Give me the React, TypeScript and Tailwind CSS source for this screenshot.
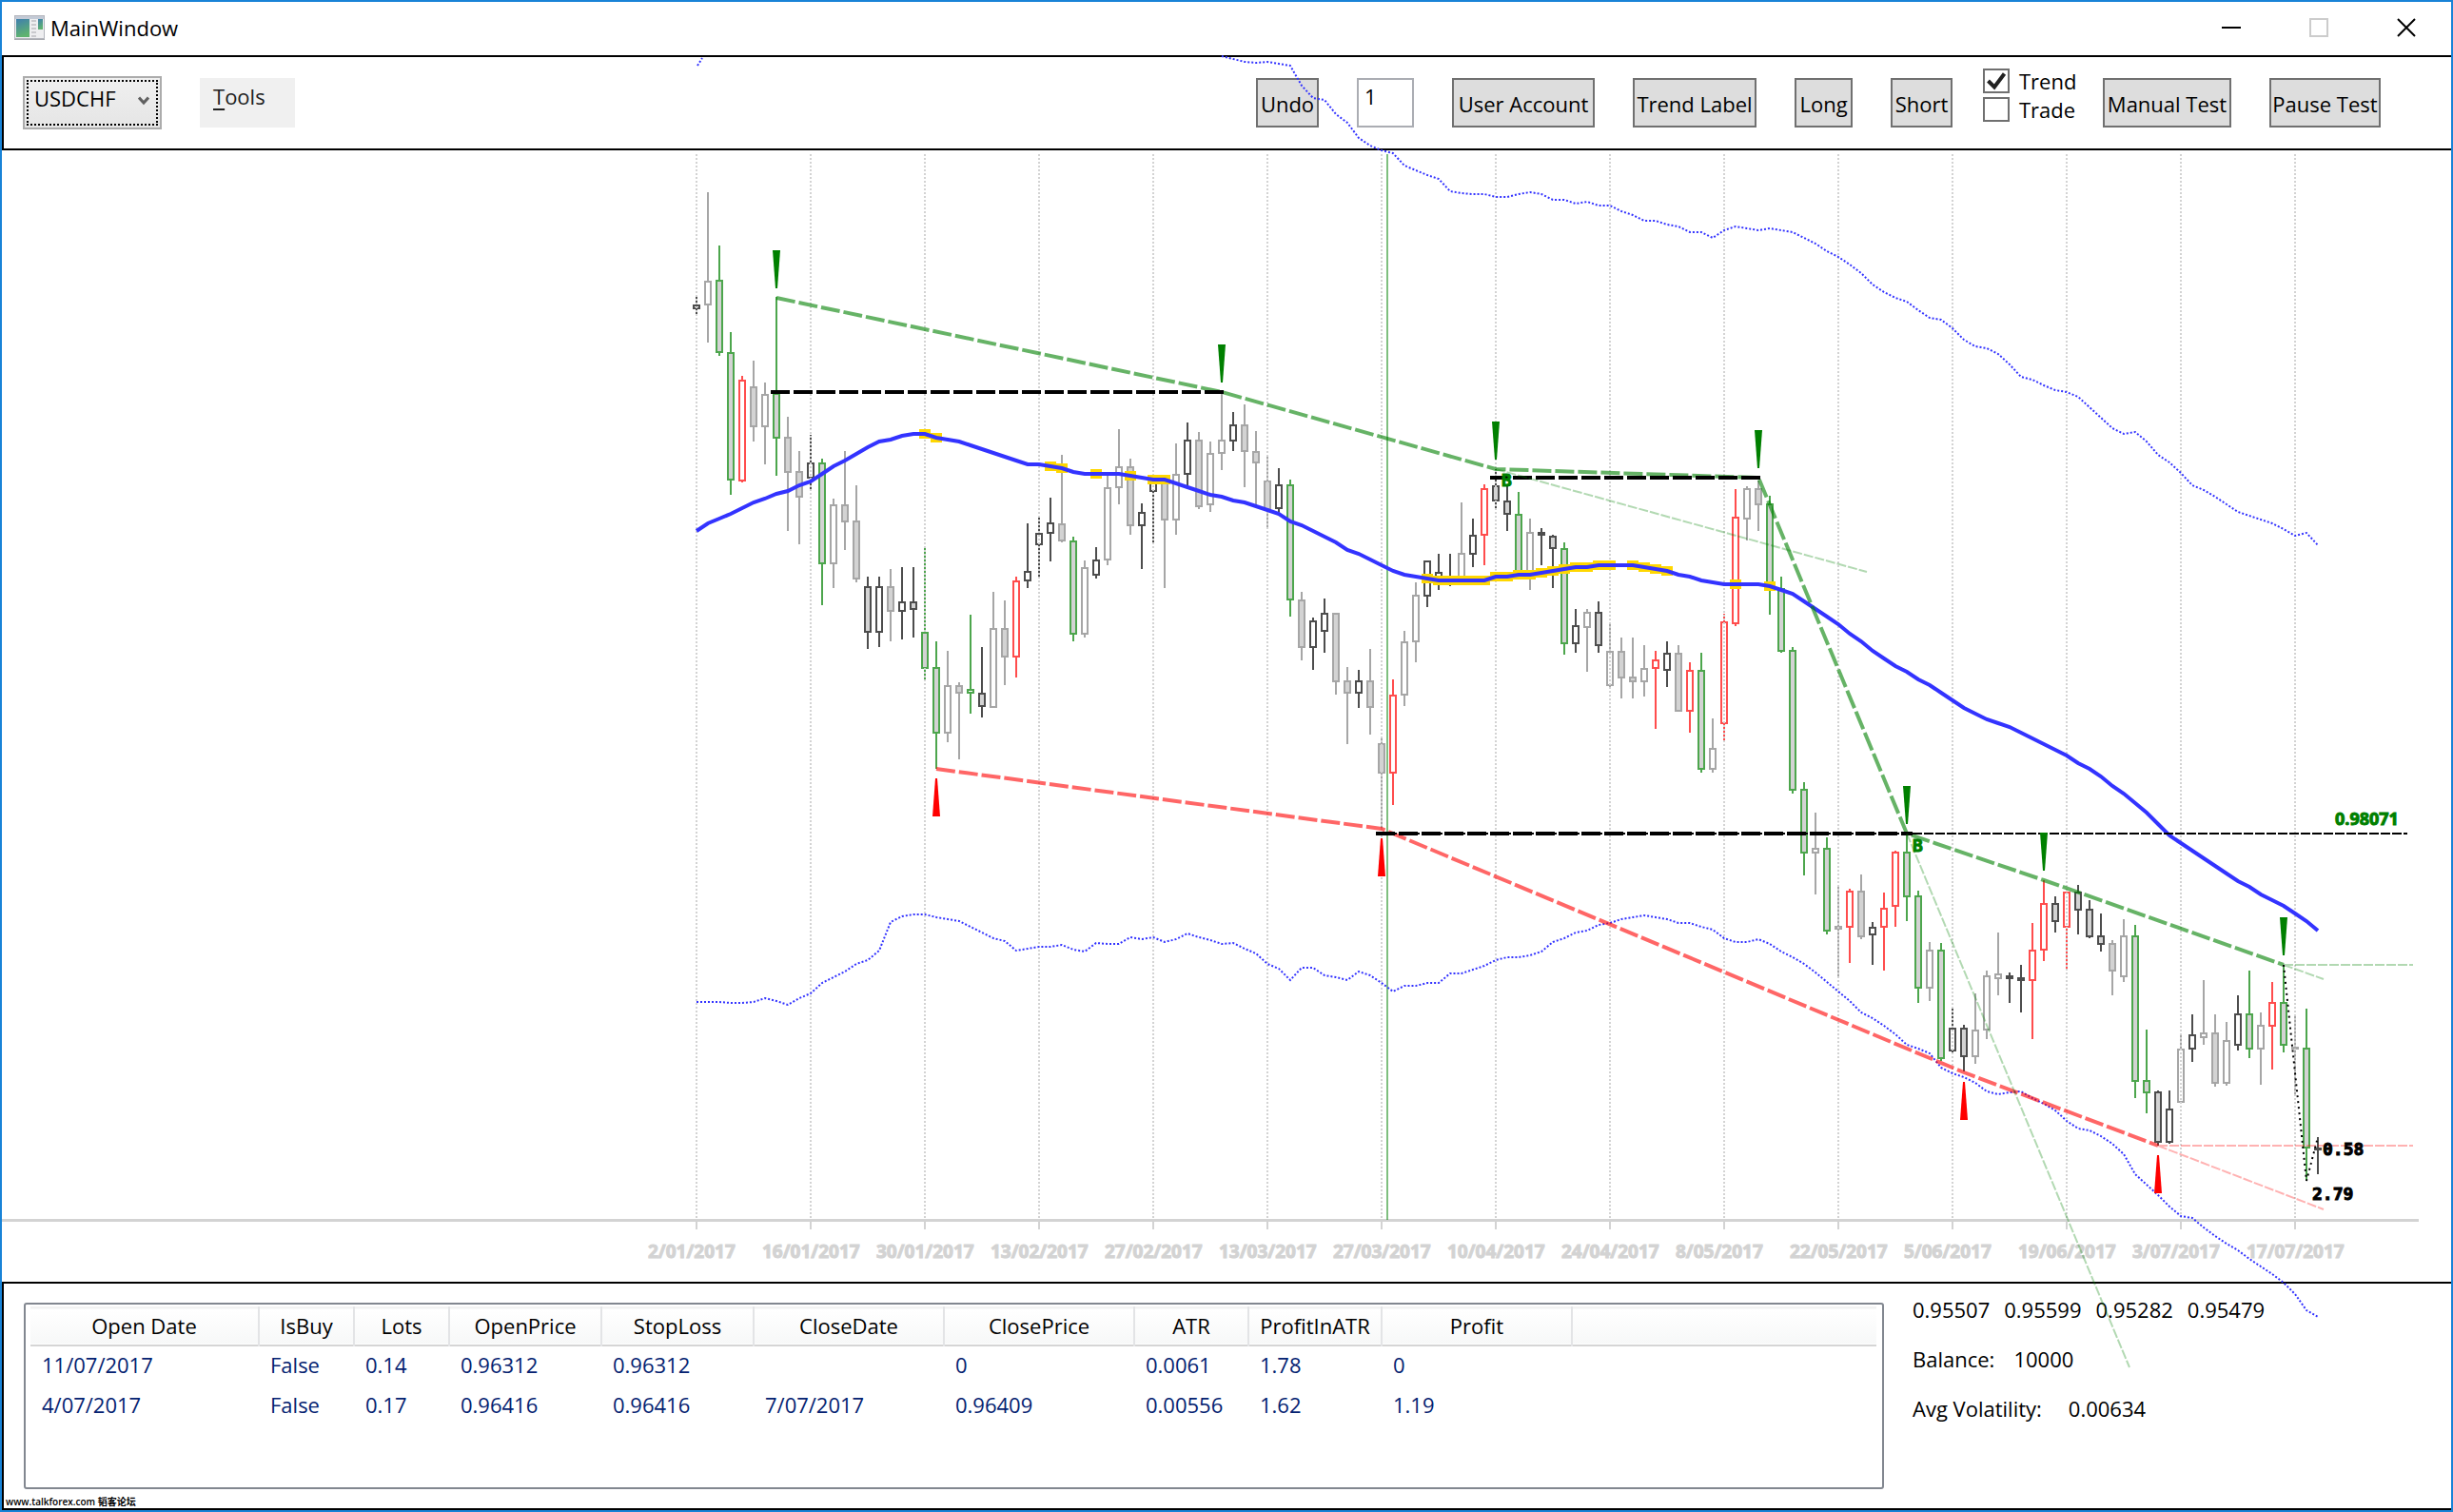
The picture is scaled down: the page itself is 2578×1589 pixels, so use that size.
import React from 'react';

type Kind = 'G' | 'g' | 'R' | 'L' | 'l' | 'D' | 'd';
type Candle = [Kind, number, number, number, number];

const X0 = 732;
const STEP = 12;
const px = (i: number) => X0 + i * STEP;

// kind, high, body top, body bottom, low
const candles: Candle[] = [
  ['d', 311, 320, 325, 330], ['l', 202, 295, 321, 360], ['G', 258, 294, 371, 374], ['G', 349, 370, 505, 520],
  ['R', 395, 399, 506, 507], ['L', 379, 406, 449, 464], ['l', 402, 414, 449, 488], ['G', 312, 413, 461, 500],
  ['L', 438, 459, 497, 558], ['L', 474, 495, 523, 572], ['d', 457, 486, 503, 515], ['G', 482, 486, 593, 636],
  ['l', 524, 530, 593, 618], ['L', 474, 530, 549, 578], ['L', 510, 547, 609, 612], ['D', 606, 616, 665, 682],
  ['d', 606, 616, 665, 680], ['L', 598, 616, 643, 674], ['d', 596, 632, 643, 672], ['D', 596, 632, 641, 670],
  ['G', 576, 664, 703, 715], ['G', 674, 701, 771, 808], ['l', 684, 720, 771, 780], ['L', 717, 720, 729, 798],
  ['g', 646, 724, 729, 750], ['D', 680, 728, 743, 754], ['l', 622, 660, 744, 744], ['L', 631, 660, 691, 720],
  ['R', 606, 610, 691, 712], ['d', 550, 600, 611, 618], ['d', 543, 560, 573, 607], ['d', 523, 549, 561, 590],
  ['L', 478, 550, 569, 570], ['G', 564, 568, 667, 674], ['l', 589, 596, 667, 670], ['d', 575, 588, 605, 608],
  ['l', 498, 512, 589, 594], ['l', 451, 490, 513, 530], ['L', 482, 490, 553, 562], ['d', 529, 538, 553, 598],
  ['d', 503, 506, 517, 571], ['L', 504, 507, 547, 618], ['l', 466, 498, 547, 562], ['d', 444, 462, 499, 514],
  ['L', 454, 462, 533, 535], ['l', 464, 476, 531, 538], ['l', 413, 462, 477, 494], ['d', 433, 446, 464, 474],
  ['L', 425, 446, 475, 512], ['L', 453, 474, 487, 532], ['L', 479, 505, 536, 555], ['d', 492, 509, 535, 541],
  ['G', 504, 509, 631, 648], ['L', 622, 630, 681, 694], ['d', 649, 652, 681, 704], ['d', 629, 644, 664, 686],
  ['L', 644, 644, 717, 730], ['L', 701, 715, 729, 782], ['d', 704, 715, 729, 744], ['L', 682, 715, 744, 772],
  ['L', 775, 781, 813, 870], ['R', 714, 730, 813, 846], ['l', 663, 674, 731, 742], ['l', 612, 625, 675, 696],
  ['d', 589, 589, 627, 638], ['d', 582, 601, 608, 620], ['D', 582, 606, 610, 616], ['l', 528, 581, 608, 608],
  ['d', 545, 562, 583, 596], ['R', 509, 513, 563, 594], ['D', 493, 510, 527, 534], ['D', 509, 526, 541, 558],
  ['G', 517, 540, 604, 606], ['l', 545, 559, 604, 620], ['D', 555, 559, 563, 594], ['D', 562, 563, 577, 618],
  ['G', 570, 576, 677, 688], ['d', 640, 657, 677, 686], ['l', 640, 643, 660, 706], ['D', 632, 643, 679, 686],
  ['l', 656, 684, 721, 723], ['L', 670, 684, 713, 734], ['L', 670, 711, 717, 734], ['l', 678, 702, 717, 732],
  ['R', 684, 693, 703, 766], ['d', 674, 686, 705, 722], ['L', 678, 686, 748, 748], ['R', 696, 704, 748, 770],
  ['G', 686, 704, 809, 812], ['l', 755, 786, 809, 812], ['R', 645, 653, 761, 778], ['R', 514, 543, 656, 658],
  ['l', 511, 513, 546, 568], ['L', 505, 513, 531, 558], ['G', 521, 529, 614, 646], ['G', 606, 618, 685, 686],
  ['G', 680, 683, 831, 834], ['G', 822, 829, 897, 920], ['l', 854, 891, 897, 940], ['G', 880, 891, 979, 982],
  ['L', 931, 973, 977, 1026], ['R', 934, 936, 975, 1012], ['L', 919, 936, 985, 987], ['d', 969, 974, 983, 1014],
  ['R', 938, 954, 975, 1020], ['R', 894, 895, 953, 974], ['G', 876, 895, 943, 968], ['G', 936, 941, 1039, 1054],
  ['l', 990, 998, 1039, 1052], ['G', 991, 998, 1113, 1115], ['d', 1060, 1080, 1105, 1106], ['D', 1077, 1080, 1111, 1126],
  ['l', 1044, 1082, 1111, 1118], ['l', 1020, 1025, 1083, 1092], ['l', 980, 1023, 1029, 1046], ['D', 1022, 1025, 1029, 1054],
  ['D', 1014, 1027, 1031, 1064], ['R', 970, 998, 1031, 1092], ['R', 925, 949, 999, 1010], ['D', 942, 949, 969, 980],
  ['R', 937, 937, 975, 1019], ['D', 930, 937, 957, 982], ['D', 946, 955, 985, 986], ['D', 960, 983, 993, 1000],
  ['L', 988, 991, 1021, 1046], ['l', 966, 983, 1027, 1032], ['G', 972, 983, 1137, 1154], ['G', 1082, 1135, 1149, 1170],
  ['D', 1146, 1147, 1201, 1204], ['d', 1146, 1165, 1201, 1202], ['l', 1087, 1102, 1159, 1160], ['d', 1066, 1087, 1103, 1116],
  ['l', 1030, 1085, 1091, 1098], ['L', 1066, 1085, 1139, 1142], ['l', 1074, 1093, 1139, 1141], ['d', 1046, 1065, 1099, 1104],
  ['G', 1020, 1065, 1103, 1112], ['l', 1064, 1077, 1103, 1140], ['R', 1032, 1053, 1079, 1124], ['G', 1014, 1053, 1099, 1106],
  ['L', 1068, 1100, 1103, 1152], ['G', 1060, 1101, 1207, 1241], ['D', 1195, 1206, 1209, 1234],
];

const strokeOf: Record<Kind, string> = {
  G: '#4da64d', g: '#4da64d', R: '#ff4d4d', L: '#a6a6a6', l: '#a6a6a6', D: '#4d4d4d', d: '#4d4d4d',
};
const isFilled = (k: Kind) => k === 'G' || k === 'L' || k === 'D';

const movingAverage = [
  558, 550, 545, 540, 534, 528, 524, 519, 516, 510, 506, 498, 490, 484, 477, 470, 464, 462, 458, 456,
  456, 460, 462, 464, 468, 472, 476, 480, 484, 488, 488, 490, 492, 496, 498, 498, 498, 498, 500, 502,
  504, 504, 508, 512, 516, 520, 522, 526, 528, 532, 536, 540, 548, 552, 558, 564, 570, 578, 582, 588,
  594, 600, 604, 606, 608, 610, 610, 610, 610, 610, 606, 606, 604, 604, 602, 600, 598, 596, 596, 594,
  594, 594, 594, 596, 598, 600, 604, 606, 610, 612, 614, 614, 614, 614, 616, 620, 624, 632, 640, 648,
  656, 666, 674, 684, 692, 700, 706, 714, 720, 728, 736, 744, 750, 756, 760, 764, 770, 776, 782, 788,
  794, 802, 808, 816, 826, 834, 844, 854, 866, 878, 886, 894, 902, 910, 918, 926, 932, 940, 946, 952,
  960, 968, 978,
];

// candles that touch the average
const touches = [
  20, 21, 31, 32, 35, 38, 40, 41, 64, 65, 66, 67, 68, 69, 70, 71, 72, 73, 74, 75, 76, 77, 78, 79, 80,
  82, 83, 84, 85, 91, 94,
];

const UPPER_START = 46;
const upperBand = [
  59, 62, 65, 66, 65, 67, 69, 90, 103, 105, 120, 129, 145, 153, 158, 161, 174, 179, 184, 188, 201, 203,
  204, 204, 207, 207, 204, 202, 204, 210, 210, 214, 212, 216, 216, 222, 226, 232, 232, 236, 238, 244,
  244, 250, 242, 238, 240, 242, 240, 242, 244, 250, 256, 264, 270, 278, 287, 299, 307, 313, 317, 326,
  334, 336, 345, 357, 364, 366, 372, 383, 396, 399, 405, 410, 412, 417, 428, 439, 450, 456, 454, 464,
  478, 486, 497, 510, 515, 522, 530, 538, 542, 546, 550, 556, 563, 560, 573,
];

const lowerBand = [
  1053, 1053, 1053, 1054, 1054, 1053, 1049, 1052, 1056, 1049, 1044, 1033, 1027, 1021, 1013, 1009, 999,
  969, 963, 961, 961, 964, 966, 968, 974, 980, 986, 989, 999, 997, 995, 995, 993, 998, 1000, 991, 992,
  992, 985, 987, 985, 990, 987, 981, 985, 988, 992, 991, 997, 1002, 1013, 1018, 1030, 1017, 1017, 1025,
  1027, 1030, 1021, 1025, 1033, 1042, 1036, 1036, 1033, 1033, 1023, 1023, 1019, 1015, 1009, 1006, 1006,
  1004, 1000, 990, 986, 980, 978, 972, 970, 966, 964, 962, 964, 966, 970, 970, 974, 977, 986, 990, 990,
  987, 992, 1000, 1006, 1013, 1022, 1032, 1042, 1052, 1064, 1070, 1078, 1087, 1098, 1102, 1107, 1122,
  1128, 1132, 1138, 1147, 1150, 1148, 1147, 1154, 1160, 1167, 1178, 1186, 1188, 1194, 1202, 1213, 1234,
  1245, 1256, 1268, 1278, 1280, 1290, 1299, 1307, 1314, 1323, 1331, 1339, 1348, 1360, 1377, 1384,
];

const dates = [
  '2/01/2017', '16/01/2017', '30/01/2017', '13/02/2017', '27/02/2017', '13/03/2017', '27/03/2017',
  '10/04/2017', '24/04/2017', '8/05/2017', '22/05/2017', '5/06/2017', '19/06/2017', '3/07/2017',
  '17/07/2017',
];

const peaks = [[816, 313], [1284, 412], [1572, 493], [1848, 502], [2004, 876], [2148, 925], [2400, 1014]];
const troughs = [[984, 808], [1452, 871], [2064, 1127], [2268, 1204]];

const toPoints = (values: number[], start = 0) => values.map((y, i) => `${px(start + i)},${y}`).join(' ');
const join = (points: number[][]) => points.map((p) => p.join(',')).join(' ');

const Chart: React.FC = () => (
  <svg viewBox="2 158 2574 1189" className="block w-full overflow-visible pointer-events-none">
    {/* Candles */}
    {candles.map(([kind, high, top, bottom, low], i) => (
      <g key={i} stroke={strokeOf[kind]} strokeWidth="2">
        <path d={`M${px(i)} ${high}V${top}M${px(i)} ${bottom}V${low}`} />
        <rect x={px(i) - 3} y={top + 1} width="6" height={Math.max(bottom - top - 2, 1)} fill={isFilled(kind) ? '#d3d3d3' : '#fff'} />
      </g>
    ))}

    {/* Grid and axis */}
    <path d="M2 1282.5H2542" stroke="#d3d3d3" strokeWidth="3" />
    {dates.map((date, i) => (
      <g key={date}>
        <path d={`M${X0 + i * 120} 162V1282`} stroke="#d3d3d3" strokeWidth="2" strokeDasharray="2 2" />
        <path d={`M${X0 + i * 120} 1282V1292`} stroke="#d3d3d3" strokeWidth="2" />
        <text x={X0 + i * 120 - 51} y="1322" fill="#d3d3d3" stroke="#d3d3d3" className="text-[19px] font-bold">{date}</text>
      </g>
    ))}
    <path d="M1458 162V1282" stroke="#008000" strokeOpacity="0.5" strokeWidth="2" />

    {/* Moving average with bands */}
    {touches.map((i) => (
      <rect key={i} x={px(i) - 6} y={movingAverage[i] - 5} width="12" height="10" fill="#ffd700" />
    ))}
    <g fill="none" stroke="#3333ff">
      <polyline points={toPoints(movingAverage)} strokeWidth="4" />
      <polyline points={toPoints(upperBand, UPPER_START)} strokeWidth="2" strokeDasharray="2 2" />
      <polyline points={toPoints(lowerBand)} strokeWidth="2" strokeDasharray="2 2" />
      <path d="M733 69L738 61" strokeWidth="2" strokeDasharray="2 2" />
    </g>

    {/* Trend lines */}
    <g fill="none" strokeWidth="4" strokeDasharray="20 4">
      <polyline points={join(peaks)} stroke="#008000" strokeOpacity="0.6" />
      <polyline points={join(troughs)} stroke="#ff0000" strokeOpacity="0.6" />
      <path d="M810 412H1286" stroke="#000" />
      <path d="M1566 502H1850" stroke="#000" />
      <path d="M1446 876H2010" stroke="#000" />
    </g>
    <g fill="none" strokeWidth="2" strokeDasharray="10 2">
      <path d="M1446 876H2530" stroke="#000" />
      <path d="M1572 493L1962 601" stroke="#008000" strokeOpacity="0.3" />
      <path d="M2004 876L2238 1437" stroke="#008000" strokeOpacity="0.3" />
      <path d="M2400 1014H2536M2400 1014L2442 1029" stroke="#008000" strokeOpacity="0.3" />
      <path d="M2268 1204H2536M2268 1204L2442 1271" stroke="#ff0000" strokeOpacity="0.3" />
    </g>
    <path d="M2400 1014L2424 1241L2436 1195" fill="none" stroke="#000" strokeWidth="2" strokeDasharray="2 4" />

    {/* Pivot markers */}
    {peaks.map(([x, y]) => (
      <path key={x} d={`M${x - 4} ${y - 50}h8l-3 40h-2z`} fill="#008000" />
    ))}
    {troughs.map(([x, y]) => (
      <path key={x} d={`M${x - 4} ${y + 50}h8l-3 -40h-2z`} fill="#ff0000" />
    ))}

    <g strokeWidth="1" className="font-['DejaVu_Sans_Mono',monospace] text-[18px] font-bold">
      <text x="1578" y="511" fill="#008000" stroke="#008000">B</text>
      <text x="2010" y="895" fill="#008000" stroke="#008000">B</text>
      <text x="2441" y="1214" stroke="#000">0.58</text>
      <text x="2430" y="1261" stroke="#000">2.79</text>
    </g>
    <text x="2454" y="867" fill="#008000" stroke="#008000" className="text-[18px] font-bold">0.98071</text>
  </svg>
);

const ToolButton: React.FC<{ className: string; children: string }> = ({ className, children }) => (
  <button className={`h-[52px] border-2 border-[#707070] bg-[#dddddd] whitespace-nowrap flex items-center justify-center pt-[2px] ${className}`}>
    {children}
  </button>
);

const CheckBox: React.FC<{ label: string; checked?: boolean }> = ({ label, checked }) => (
  <label className="flex items-center gap-[10px] h-[30px]">
    <span className="relative block w-7 h-[26px]">
      <input type="checkbox" defaultChecked={checked} className="peer appearance-none block w-7 h-[26px] border-2 border-[#707070] bg-white" />
      <svg viewBox="0 0 28 26" className="absolute inset-0 hidden peer-checked:block pointer-events-none">
        <path d="M5.5 13L12 19.5L22.5 5.5" fill="none" stroke="#212121" strokeWidth="4" />
      </svg>
    </span>
    {label}
  </label>
);

const columns = [
  { name: 'Open Date', width: 'w-[240px]' },
  { name: 'IsBuy', width: 'w-[100px]' },
  { name: 'Lots', width: 'w-[100px]' },
  { name: 'OpenPrice', width: 'w-[160px]' },
  { name: 'StopLoss', width: 'w-[160px]' },
  { name: 'CloseDate', width: 'w-[200px]' },
  { name: 'ClosePrice', width: 'w-[200px]' },
  { name: 'ATR', width: 'w-[120px]' },
  { name: 'ProfitInATR', width: 'w-[140px]' },
  { name: 'Profit', width: 'w-[200px]' },
];

const orders = [
  ['11/07/2017', 'False', '0.14', '0.96312', '0.96312', '', '0', '0.0061', '1.78', '0'],
  ['4/07/2017', 'False', '0.17', '0.96416', '0.96416', '7/07/2017', '0.96409', '0.00556', '1.62', '1.19'],
];

const App: React.FC = () => {
  return (
    <div className="min-h-screen flex flex-col bg-white border-2 border-[#1883d7] text-black text-[22px] leading-[30px] font-['Open_Sans','Noto_Sans_CJK_SC',sans-serif]">
      {/* Title bar */}
      <header className="h-14 flex items-center pl-[13px] pr-[37px] pb-[2px]">
        <svg viewBox="0 0 32 26" className="w-8 h-[26px] mr-[6px]">
          <defs>
            <linearGradient id="pane" x1="0" y1="0" x2="0.3" y2="1">
              <stop offset="0" stopColor="#3f7fae" />
              <stop offset="1" stopColor="#5fb36f" />
            </linearGradient>
          </defs>
          <rect x="0.5" y="0.5" width="31" height="24" fill="#eeeef0" stroke="#b4b6bd" />
          <rect x="1" y="1" width="30" height="3" fill="#c3cad6" />
          <rect x="2" y="4" width="14" height="19" fill="url(#pane)" />
          <path d="M18 6h5M18 10h5M18 14h5M18 18h5M18 22h5" stroke="#c9c9cd" strokeWidth="2" />
          <rect x="25" y="4" width="5" height="11" fill="url(#pane)" />
          <path d="M0 25.5h32" stroke="#a9abb0" />
        </svg>
        <h1>MainWindow</h1>
        <div className="ml-auto flex items-center gap-[72px]">
          <button aria-label="Minimize">
            <svg viewBox="0 0 20 20" className="w-5 h-5"><path d="M0 10H20" stroke="#000" strokeWidth="2" /></svg>
          </button>
          <button aria-label="Maximize" disabled>
            <svg viewBox="0 0 20 20" className="w-5 h-5"><path d="M1 1H19V19H1Z" fill="none" stroke="#cccccc" strokeWidth="2" /></svg>
          </button>
          <button aria-label="Close">
            <svg viewBox="0 0 20 20" className="w-5 h-5"><path d="M1 1L19 19M19 1L1 19" stroke="#000" strokeWidth="2" /></svg>
          </button>
        </div>
      </header>

      {/* Toolbar */}
      <div className="h-[100px] border-y-2 border-l-2 border-black flex items-start pt-5 pl-5 pr-[74px]">
        <div className="relative">
          <select
            aria-label="Symbol"
            className="appearance-none block w-[146px] h-14 pl-[10px] pb-[10px] border-2 border-[#acacac] bg-linear-to-b from-[#f0f0f0] to-[#e5e5e5] outline-2 outline-dotted outline-black -outline-offset-6"
          >
            <option>USDCHF</option>
          </select>
          <svg viewBox="0 0 12 10" className="absolute right-[13px] top-[21px] w-3 h-[10px] pointer-events-none">
            <path d="M1 1.5L6 7L11 1.5" fill="none" stroke="#606060" strokeWidth="3" />
          </svg>
        </div>
        <button className="mt-[2px] ml-10 w-[100px] h-[52px] pl-[14px] pb-[14px] flex items-center bg-[#f0f0f0] text-[#212121]">
          <span className="underline underline-offset-4">T</span>ools
        </button>

        <div className="ml-auto mt-[2px] flex items-start">
          <ToolButton className="w-[66px]">Undo</ToolButton>
          <input aria-label="Steps" defaultValue="1" className="ml-10 w-[60px] h-[52px] pl-[6px] pb-[14px] border-2 border-[#abadb3] bg-white" />
          <ToolButton className="ml-10 w-[150px]">User Account</ToolButton>
          <ToolButton className="ml-10 w-[130px]">Trend Label</ToolButton>
          <ToolButton className="ml-10 w-[61px]">Long</ToolButton>
          <ToolButton className="ml-10 w-[65px]">Short</ToolButton>
          <div className="ml-8 -mt-3 w-[94px]">
            <CheckBox label="Trend" checked />
            <CheckBox label="Trade" />
          </div>
          <ToolButton className="ml-8 w-[135px]">Manual Test</ToolButton>
          <ToolButton className="ml-10 w-[117px]">Pause Test</ToolButton>
        </div>
      </div>

      {/* The price bands run past the chart, over the bars above and below */}
      <main className="relative z-10 pointer-events-none">
        <Chart />
      </main>

      {/* Orders and account */}
      <footer className="relative flex-1 flex items-start border-y-2 border-l-2 border-black pt-5 pl-[21px]">
        <div className="w-[1955px] h-[196px] border-2 border-[#828790] rounded-[3px] pt-[2px] pl-[5px] pr-[6px]">
          <table className="w-full table-fixed">
            <thead>
              <tr className="h-10 border-t-2 border-t-[#f2f2f2] border-b-2 border-b-[#d5d5d5] bg-linear-to-b from-white to-[#f7f8f8]">
                {columns.map((column) => (
                  <th key={column.name} className={`${column.width} p-0 pb-[2px] font-normal border-r-2 border-r-[#e3e4e6]`}>{column.name}</th>
                ))}
                <td></td>
              </tr>
            </thead>
            <tbody>
              {orders.map((order) => (
                <tr key={order[0]} className="h-[42px] text-[#042271]">
                  {order.map((value, i) => (
                    <td key={i} className="p-0 pl-3 pb-[3px]">{value}</td>
                  ))}
                  <td></td>
                </tr>
              ))}
            </tbody>
          </table>
        </div>
        <div className="ml-[30px] -mt-2 flex flex-col gap-[22px]">
          <p className="flex gap-[15px]">
            <span>0.95507</span>
            <span>0.95599</span>
            <span>0.95282</span>
            <span>0.95479</span>
          </p>
          <p className="flex gap-5">
            <span>Balance:</span>
            <span>10000</span>
          </p>
          <p className="flex gap-7">
            <span>Avg Volatility:</span>
            <span>0.00634</span>
          </p>
        </div>
        <small className="absolute left-[2px] bottom-0 text-[10px] leading-[14px] font-semibold">www.talkforex.com 韬客论坛</small>
      </footer>
    </div>
  );
};

export default App;
